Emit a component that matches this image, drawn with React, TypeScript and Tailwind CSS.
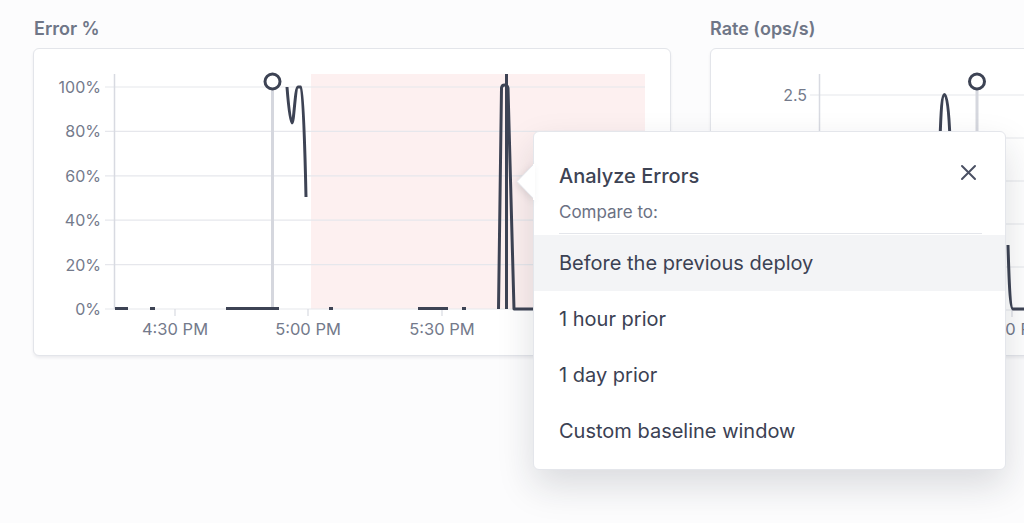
import React from 'react';

const ink = '#3d4354';
const gridColor = '#e6e7ec';
const axisColor = '#d8dae1';
const labelColor = '#747a8b';

function ErrorChart() {
  const rows = [
    { y: 87, label: '100%' },
    { y: 131.4, label: '80%' },
    { y: 175.8, label: '60%' },
    { y: 220.2, label: '40%' },
    { y: 264.6, label: '20%' },
    { y: 309, label: '0%' },
  ];
  const ticks = [
    { x: 175, label: '4:30 PM' },
    { x: 308, label: '5:00 PM' },
    { x: 442, label: '5:30 PM' },
  ];

  return (
    <svg width={636} height={306} viewBox="34 49 636 306" className="block">
      <rect x={311} y={74} width={334} height={235} fill="#fdf0f0" />
      {rows.map((r) => (
        <g key={r.label}>
          <line x1={105} x2={645} y1={r.y} y2={r.y} stroke={gridColor} strokeWidth={1.2} />
          <text
            x={101}
            y={r.y}
            textAnchor="end"
            dominantBaseline="central"
            fontSize={16}
            fill={labelColor}
            fontFamily="Inter, sans-serif"
          >
            {r.label}
          </text>
        </g>
      ))}
      <line x1={114.5} x2={114.5} y1={74} y2={309} stroke={axisColor} strokeWidth={1.5} />
      {ticks.map((t) => (
        <g key={t.label}>
          <line x1={t.x} x2={t.x} y1={309} y2={316} stroke={axisColor} strokeWidth={1.2} />
          <text
            x={t.x}
            y={329}
            textAnchor="middle"
            dominantBaseline="central"
            fontSize={16.5}
            fill={labelColor}
            fontFamily="Inter, sans-serif"
          >
            {t.label}
          </text>
        </g>
      ))}

      {/* deploy marker */}
      <line x1={272.5} x2={272.5} y1={88} y2={309} stroke="#d5d7de" strokeWidth={3} />
      <circle cx={272.5} cy={81.5} r={7.5} fill="white" stroke={ink} strokeWidth={3} />

      {/* series */}
      <g stroke={ink} strokeWidth={3} fill="none" strokeLinecap="butt" strokeLinejoin="round">
        <line x1={115} x2={128} y1={308.5} y2={308.5} />
        <line x1={150} x2={155} y1={308.5} y2={308.5} />
        <line x1={226} x2={279} y1={308.5} y2={308.5} />
        <line x1={329} x2={333} y1={308.5} y2={308.5} />
        <line x1={418} x2={448} y1={308.5} y2={308.5} />
        <line x1={462} x2={466} y1={308.5} y2={308.5} />
        <path d="M287,87 C288,100 290,123 292,123 C294,123 295,87 298,87 L301,87 C303,87 305,150 306,197" />
        <path d="M498.5,309 L501.5,88 C502,84 507,84 508,88 L514,309 L534,309" />
        <path d="M506.5,74 L506.5,309" />
      </g>
    </svg>
  );
}

function RateChart() {
  const rows = [95, 138, 181, 224, 267, 310];
  return (
    <svg width={638} height={306} viewBox="711 49 638 306" className="block">
      {rows.map((y) => (
        <line key={y} x1={810} x2={1350} y1={y} y2={y} stroke={gridColor} strokeWidth={1.2} />
      ))}
      <text
        x={807}
        y={95}
        textAnchor="end"
        dominantBaseline="central"
        fontSize={16}
        fill={labelColor}
        fontFamily="Inter, sans-serif"
      >
        2.5
      </text>
      <line x1={819.5} x2={819.5} y1={74} y2={310} stroke={axisColor} strokeWidth={1.5} />
      <line x1={1012} x2={1012} y1={310} y2={317} stroke={axisColor} strokeWidth={1.2} />
      <text
        x={1013}
        y={329}
        textAnchor="middle"
        dominantBaseline="central"
        fontSize={16.5}
        fill={labelColor}
        fontFamily="Inter, sans-serif"
      >
        5:00 PM
      </text>

      <line x1={977} x2={977} y1={88} y2={310} stroke="#d5d7de" strokeWidth={3} />
      <circle cx={977} cy={81.5} r={7.5} fill="white" stroke={ink} strokeWidth={3} />

      <g stroke={ink} strokeWidth={3} fill="none" strokeLinejoin="round">
        <path d="M940,140 C941,110 942,94.5 944.5,94.5 C947,94.5 949,110 950,140" />
        <path d="M1008,245 C1009,280 1010,309 1013,309 L1060,309" />
      </g>
    </svg>
  );
}

function AnalyzePopover() {
  const options = ['Before the previous deploy', '1 hour prior', '1 day prior', 'Custom baseline window'];
  return (
    <div className="absolute left-[533px] top-[131px] w-[473px] h-[339px] rounded-md border border-[#e4e6eb] bg-white shadow-[0_16px_36px_rgba(30,35,50,0.15)]">
      {/* arrow */}
      <svg
        width={19}
        height={36}
        viewBox="0 0 19 36"
        className="absolute left-[-18px] top-[32px] drop-shadow-[-2px_2px_3px_rgba(30,35,50,0.10)]"
      >
        <path d="M18,0 L1,17.5 L18,35" fill="white" stroke="#e4e6eb" strokeWidth={1} />
        <rect x={17} y={0} width={2} height={36} fill="white" />
      </svg>

      <div className="flex items-start justify-between pl-[25px] pr-[28px] pt-[30px]">
        <div>
          <div className="text-[20px] font-medium leading-[28px] text-[#3d4354]">Analyze Errors</div>
          <div className="mt-[10px] text-[17px] leading-[24px] text-[#6b7183]">Compare to:</div>
        </div>
        <button className="mt-[2px] text-[#4a5063]">
          <svg width={17} height={17} viewBox="0 0 17 17">
            <path d="M2,2 L15,15 M15,2 L2,15" stroke="currentColor" strokeWidth={2} strokeLinecap="round" />
          </svg>
        </button>
      </div>
      <div className="ml-[25px] mr-[23px] mt-[9px] h-px bg-[#e4e6eb]" />
      <ul className="mt-px">
        {options.map((o, i) => (
          <li
            key={o}
            className={`flex h-[56px] items-center pl-[25px] text-[20px] text-[#3b4153] ${
              i === 0 ? 'bg-[#f3f4f6]' : ''
            }`}
          >
            {o}
          </li>
        ))}
      </ul>
    </div>
  );
}

export default function App() {
  return (
    <div className="relative h-[523px] w-[1024px] overflow-hidden bg-[#fcfcfd] font-['Inter',sans-serif]">
      <div className="flex gap-[39px] pl-[33px] pt-[18px]">
        <section className="w-[638px] shrink-0">
          <h3 className="pl-px text-[18px] font-semibold leading-[22px] text-[#6f7687]">Error %</h3>
          <div className="mt-[8px] h-[308px] overflow-hidden rounded-md border border-[#e3e5ea] bg-white shadow-[0_2px_3px_rgba(30,35,50,0.07)]">
            <ErrorChart />
          </div>
        </section>
        <section className="w-[640px] shrink-0">
          <h3 className="text-[18px] font-semibold leading-[22px] text-[#6f7687]">Rate (ops/s)</h3>
          <div className="mt-[8px] h-[308px] overflow-hidden rounded-md border border-[#e3e5ea] bg-white shadow-[0_2px_3px_rgba(30,35,50,0.07)]">
            <RateChart />
          </div>
        </section>
      </div>
      <AnalyzePopover />
    </div>
  );
}
